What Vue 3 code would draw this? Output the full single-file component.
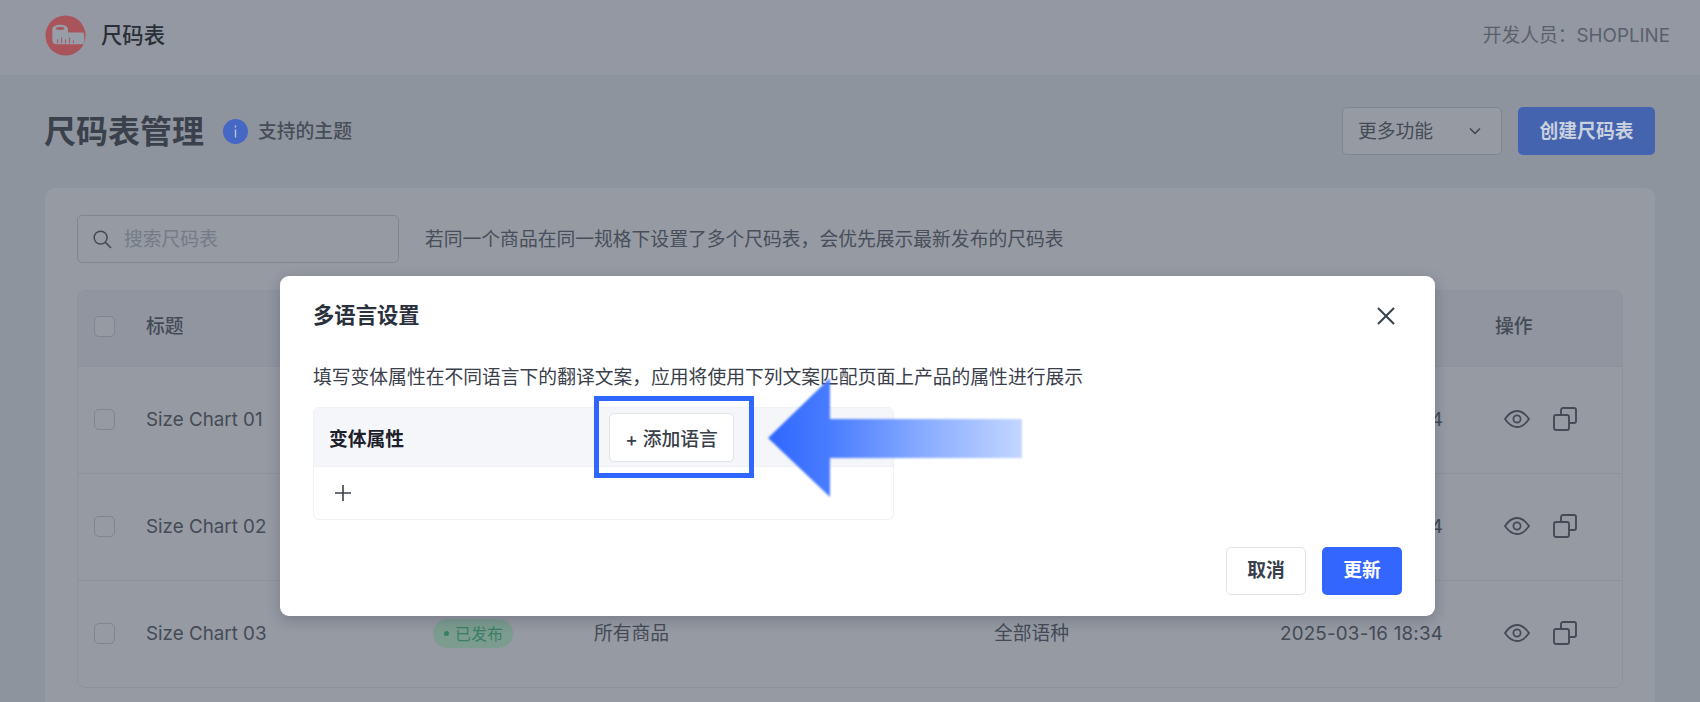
<script setup>
const columns = ['标题', '状态', '适用商品', '语言', '更新时间', '操作']
const rows = [
  { title: 'Size Chart 01', scope: '', lang: '全部语种', date: '2025-03-16 18:34' },
  { title: 'Size Chart 02', scope: '所有商品', lang: '全部语种', date: '2025-03-16 18:34' },
  { title: 'Size Chart 03', scope: '所有商品', lang: '全部语种', date: '2025-03-16 18:34' }
]
</script>

<template>
  <div class="page">
    <header class="topbar">
      <div class="brand">
        <svg class="logo" viewBox="0 0 42 42">
          <circle cx="21" cy="21" r="20.500" fill="#a9545a" />
          <path d="M7.500 14C7.500 12 11 10 15.500 10S23.500 12 23.500 14V18H39.500C40.500 22 40.500 26 39.500 30H12C9 30 7.500 28 7.500 26Z" fill="#989ea8" />
          <ellipse cx="15.500" cy="13.800" rx="4.200" ry="1.500" fill="#a9545a" />
          <path d="M13 29v-4M17 29v-6M21 29v-4M25 29v-6M29 29v-3" stroke="#a9545a" stroke-width="1" />
        </svg>
        <span class="brand-name">尺码表</span>
      </div>
      <span class="developer">开发人员：SHOPLINE</span>
    </header>

    <main class="main">
      <div class="title-row">
        <div class="title-left">
          <h1 class="title">尺码表管理</h1>
          <svg class="info" viewBox="0 0 25 25">
            <circle cx="12.500" cy="12.500" r="12.500" fill="#4468c4" />
            <rect x="11.800" y="6.500" width="1.400" height="2" fill="#b8c4e4" />
            <rect x="11.800" y="10.500" width="1.400" height="8" fill="#b8c4e4" />
          </svg>
          <span class="theme-link">支持的主题</span>
        </div>
        <div class="title-actions">
          <div class="select">
            <span class="select-text">更多功能</span>
            <svg class="chevron" viewBox="0 0 12 8"><path d="M1 1.500l5 5 5-5" fill="none" stroke="#61666a" stroke-width="1.500" /></svg>
          </div>
          <button class="btn-create">创建尺码表</button>
        </div>
      </div>

      <section class="card">
        <div class="filter-row">
          <div class="search">
            <svg class="search-icon" viewBox="0 0 20 20">
              <circle cx="8" cy="8" r="6.800" fill="none" stroke="#6a6f73" stroke-width="1.600" />
              <path d="M13 13l6 6" stroke="#6a6f73" stroke-width="1.600" />
            </svg>
            <span class="placeholder">搜索尺码表</span>
          </div>
          <span class="hint">若同一个商品在同一规格下设置了多个尺码表，会优先展示最新发布的尺码表</span>
        </div>

        <div class="table">
          <div class="tr th">
            <span class="check-cell"><i class="checkbox"></i></span>
            <span v-for="c in columns" :key="c" class="th-text">{{ c }}</span>
          </div>
          <div v-for="r in rows" :key="r.title" class="tr td">
            <span class="check-cell"><i class="checkbox"></i></span>
            <span>{{ r.title }}</span>
            <span><em class="pill"><b class="dot"></b><span class="pill-text">已发布</span></em></span>
            <span class="cjk">{{ r.scope }}</span>
            <span class="cjk">{{ r.lang }}</span>
            <span class="date">{{ r.date }}</span>
            <span class="ops">
              <svg class="eye" viewBox="0 0 26 18">
                <path d="M1 9C4.500 3.800 8.500 1 13 1s8.500 2.800 12 8c-3.500 5.200-7.500 8-12 8S4.500 14.200 1 9z" fill="none" stroke="#6a6f73" stroke-width="1.800" />
                <circle cx="13" cy="9" r="3.600" fill="none" stroke="#6a6f73" stroke-width="1.800" />
              </svg>
              <svg class="copy" viewBox="0 0 24 24">
                <rect x="1" y="8" width="15" height="15" rx="2" fill="none" stroke="#6a6f73" stroke-width="1.900" />
                <path d="M8 8V3a2 2 0 0 1 2-2h11a2 2 0 0 1 2 2v11a2 2 0 0 1-2 2h-5" fill="none" stroke="#6a6f73" stroke-width="1.900" />
              </svg>
            </span>
          </div>
        </div>
      </section>
    </main>

    <div class="mask"></div>

    <div class="modal">
      <div class="modal-head">
        <h2 class="modal-title">多语言设置</h2>
        <svg class="close" viewBox="0 0 18 18"><path d="M1 1l16 16M17 1L1 17" stroke="#3a404b" stroke-width="2" /></svg>
      </div>
      <p class="modal-desc">填写变体属性在不同语言下的翻译文案，应用将使用下列文案匹配页面上产品的属性进行展示</p>
      <div class="attr-table">
        <div class="attr-head">
          <span class="attr-label">变体属性</span>
          <button class="btn-add">+ 添加语言</button>
        </div>
        <div class="attr-body">
          <svg class="plus" viewBox="0 0 18 18"><path d="M9 1v16M1 9h16" stroke="#3a404b" stroke-width="1.600" /></svg>
        </div>
      </div>
      <div class="modal-foot">
        <button class="btn-cancel">取消</button>
        <button class="btn-update">更新</button>
      </div>

      <div class="highlight"></div>
      <svg class="arrow" viewBox="0 0 260 125">
        <defs>
          <linearGradient id="arrowFill" x1="0" x2="1" y1="0" y2="0">
            <stop offset="0" stop-color="#2f66ff" />
            <stop offset="0.25" stop-color="#4a7dff" />
            <stop offset="0.6" stop-color="#86aaff" />
            <stop offset="1" stop-color="#c3d6ff" />
          </linearGradient>
        </defs>
        <path d="M2 62L64 2v41h192v39H64v39z" fill="url(#arrowFill)" />
      </svg>
    </div>
  </div>
</template>

<style>
html, body { margin: 0; }
</style>

<style scoped>
.page {
  position: relative;
  width: 1700px;
  height: 702px;
  overflow: hidden;
  background: #f1f4f6;
  color: #6b7074;
  font-family: Inter, "Noto Sans CJK SC", sans-serif;
  font-size: 18.8px;
}
h1, h2, p { margin: 0; }
em { font-style: normal; }
button { font-family: inherit; font-size: inherit; cursor: pointer; }

.topbar {
  height: 75px;
  box-sizing: border-box;
  padding: 0 30px 5px 45px;
  background: #fbfcfd;
  display: flex;
  align-items: center;
  justify-content: space-between;
}
.brand { display: flex; align-items: center; gap: 15px; }
.logo { position: relative; z-index: 2; width: 41px; height: 41px; }
.brand-name { font-size: 21.33px; font-weight: 500; color: #3a3d3c; padding-bottom: 3px; }
.developer { color: #91969b; padding-bottom: 3px; }

.main { padding: 32px 45px 0; }
.title-row { display: flex; justify-content: space-between; align-items: center; height: 48px; }
.title-left { display: flex; align-items: center; }
.title { margin-left: -1px; padding-bottom: 4px; font-size: 32px; font-weight: 600; color: #595e62; }
.info { position: relative; z-index: 2; width: 25px; height: 25px; margin: 0 10px 0 19px; }
.theme-link { color: #6f7378; font-weight: 500; padding-bottom: 3px; }
.title-actions { display: flex; gap: 16px; }
.select {
  width: 160px;
  height: 48px;
  box-sizing: border-box;
  padding: 0 20px 0 15px;
  display: flex;
  align-items: center;
  justify-content: space-between;
  background: #fff;
  border: 1px solid #d5d9de;
  border-radius: 5px;
}
.select-text { padding-bottom: 3px; }
.chevron { width: 12px; height: 8px; }
.btn-create {
  position: relative;
  z-index: 2;
  width: 137px;
  height: 48px;
  padding: 0 0 3px;
  background: #4464b0;
  border: 0;
  border-radius: 5px;
  color: #c9d0de;
  font-weight: 600;
}

.card {
  margin-top: 33px;
  padding: 27px 32px;
  background: #fff;
  border-radius: 10px;
}
.filter-row { display: flex; align-items: center; gap: 26px; height: 48px; }
.search {
  width: 322px;
  height: 48px;
  box-sizing: border-box;
  padding: 0 15px;
  display: flex;
  align-items: center;
  gap: 12px;
  background: #fff;
  border: 1px solid #d6dbda;
  border-radius: 5px;
}
.search-icon { width: 19px; height: 19px; }
.placeholder { color: #c3c7cd; padding-bottom: 4px; }
.hint { color: #71767a; padding-bottom: 4px; }

.table {
  margin-top: 27px;
  border: 1px solid #eef0f4;
  border-radius: 8px;
  overflow: hidden;
}
.tr {
  display: grid;
  grid-template-columns: 68px 287px 161px 400px 286px 215px 1fr;
  align-items: center;
  box-sizing: border-box;
}
.th { height: 75px; padding-bottom: 4px; background: #f4f6fa; font-weight: 500; }
.th-text { padding-bottom: 4px; }
.td { height: 107px; padding-bottom: 2px; border-top: 1px solid #f0f1f5; }
.cjk { padding-bottom: 3px; }
.date { letter-spacing: 0.2px; }
.check-cell { display: flex; padding-left: 16px; }
.checkbox {
  width: 21px;
  height: 21px;
  box-sizing: border-box;
  border: 1.500px solid #d5d9de;
  border-radius: 5px;
  background: #fff;
}
.pill {
  position: relative;
  z-index: 2;
  display: inline-flex;
  align-items: center;
  gap: 6px;
  width: 80px;
  height: 29px;
  box-sizing: border-box;
  padding-left: 11px;
  border-radius: 15px;
  background: #7c9c90;
  color: #3a7f66;
  font-size: 16px;
}
.pill-text { padding-bottom: 2px; }
.dot { width: 5px; height: 5px; border-radius: 50%; background: #3a7f66; }
.ops { display: flex; align-items: center; gap: 23px; padding-left: 9px; }
.eye { width: 26px; height: 18px; }
.copy { width: 24px; height: 24px; }

.mask {
  position: absolute;
  inset: 0;
  z-index: 1;
  background: rgba(23, 30, 51, 0.45);
}

.modal {
  position: absolute;
  left: 280px;
  top: 276px;
  z-index: 3;
  width: 1155px;
  height: 340px;
  box-sizing: border-box;
  padding: 0 33px 21px;
  display: flex;
  flex-direction: column;
  background: #fff;
  border-radius: 9px;
  box-shadow: 0 4px 14px rgba(20, 25, 40, 0.22);
  color: #3a404b;
}
.modal-head {
  display: flex;
  align-items: center;
  justify-content: space-between;
  height: 80px;
  padding-right: 7px;
}
.modal-title { padding-bottom: 6px; font-size: 21.33px; font-weight: 600; color: #2b313c; }
.close { width: 18px; height: 18px; }
.modal-desc { line-height: 44px; }
.attr-table {
  width: 581px;
  box-sizing: border-box;
  margin-top: 7px;
  border: 1px solid #eff1f5;
  border-radius: 6px;
  overflow: hidden;
}
.attr-head {
  height: 58px;
  display: flex;
  align-items: center;
  background: #f5f6fa;
  border-bottom: 1px solid #eff1f5;
  padding-left: 15px;
}
.attr-label { width: 280px; font-weight: 600; color: #1c212b; }
.btn-add {
  width: 125px;
  height: 49px;
  padding: 0;
  background: #fff;
  border: 1px solid #dfe2e8;
  border-radius: 5px;
  color: #3a404b;
  font-weight: 500;
}
.attr-body { height: 52px; display: flex; align-items: center; padding-left: 20px; }
.plus { width: 18px; height: 18px; }
.modal-foot { margin-top: auto; display: flex; justify-content: flex-end; gap: 16px; }
.btn-cancel, .btn-update { width: 80px; height: 48px; padding: 0 0 5px; border-radius: 5px; font-weight: 600; }
.btn-cancel { background: #fff; border: 1.500px solid #dfe2e8; color: #3a404b; }
.btn-update { background: #3366ff; border: 0; color: #fff; }

.highlight {
  position: absolute;
  left: 314px;
  top: 120px;
  width: 160px;
  height: 82px;
  box-sizing: border-box;
  border: 5.500px solid #2f66ff;
}
.arrow {
  position: absolute;
  left: 486px;
  top: 100px;
  width: 260px;
  height: 125px;
  filter: blur(0.8px);
}
</style>
